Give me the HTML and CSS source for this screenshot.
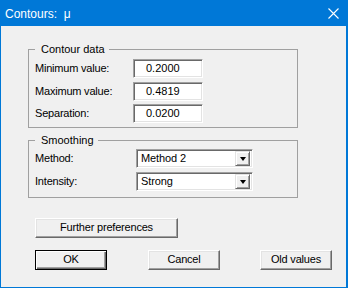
FILE: index.html
```html
<!DOCTYPE html>
<html lang="en">
<head>
<meta charset="utf-8">
<title>Contours</title>
<link rel="stylesheet" href="styles.css">
</head>
<body>
<div class="window">
  <div class="titlebar">
    <span class="title">Contours:&nbsp; μ</span>
    <svg class="close" width="11" height="11" viewBox="0 0 11 11" aria-hidden="true">
      <path d="M0.5 0.5 L10.5 10.5 M10.5 0.5 L0.5 10.5" stroke="#fff" stroke-width="1.1" fill="none"/>
    </svg>
  </div>
  <div class="content">
    <fieldset class="group group-data">
      <legend>Contour data</legend>
      <div class="rows rows-data">
        <span class="label">Minimum value:</span><span class="field">0.2000</span>
        <span class="label">Maximum value:</span><span class="field">0.4819</span>
        <span class="label">Separation:</span><span class="field">0.0200</span>
      </div>
    </fieldset>
    <fieldset class="group group-smooth">
      <legend>Smoothing</legend>
      <div class="rows rows-smooth">
        <span class="label">Method:</span>
        <span class="combo"><span class="combo-text">Method 2</span><span class="combo-btn"><span class="arrow"></span></span></span>
        <span class="label">Intensity:</span>
        <span class="combo"><span class="combo-text">Strong</span><span class="combo-btn"><span class="arrow"></span></span></span>
      </div>
    </fieldset>
    <div class="btn btn-further">Further preferences</div>
    <div class="actions">
      <div class="btn btn-default">OK</div>
      <div class="btn btn-cancel">Cancel</div>
      <div class="btn btn-old">Old values</div>
    </div>
  </div>
</div>
</body>
</html>
```
FILE: styles.css
```css
html, body {
  margin: 0;
  padding: 0;
  background: #ffffff;
}
body {
  font-family: "Liberation Sans", Arial, sans-serif;
  font-size: 11px;
  color: #000;
}
.window {
  box-sizing: border-box;
  width: 348px;
  height: 288px;
  border: 1px solid #0078d7;
  border-right-width: 2px;
  background: #f0f0f0;
  display: flex;
  flex-direction: column;
}
.titlebar {
  height: 25px;
  background: #0078d7;
  color: #fff;
  display: flex;
  align-items: center;
  justify-content: space-between;
  padding: 0 8px 0 4px;
  margin-top: -1px;
  padding-top: 1px;
  margin-right: -1px;
}
.title {
  font-family: "Liberation Sans", Arial, sans-serif;
  font-size: 12px;
  line-height: 14px;
  position: relative;
  top: 0px;
}
.close {
  display: block;
  margin-top: 0px;
}
.content {
  padding: 17px 0 0 27px;
}
.group {
  box-sizing: border-box;
  width: 270px;
  margin: 0;
  border: 1px solid #a0a0a0;
  min-width: 0;
}
.group legend {
  padding: 0 4px 0 6px;
  line-height: 12px;
  font-size: 11px;
  margin-left: 0;
}
.group-data {
  padding: 4px 0 4px 6px;
}
.group-smooth {
  margin-top: 6px;
  padding: 2.5px 0 6px 6px;
}
.rows {
  display: grid;
  align-items: center;
}
.rows-data {
  grid-template-columns: 98px 70px;
  row-gap: 3.5px;
}
.rows-smooth {
  grid-template-columns: 101px 117px;
  row-gap: 4px;
}
.label {
  line-height: 13px;
  letter-spacing: -0.2px;
}
.field {
  box-sizing: border-box;
  height: 19px;
  background: #fff;
  border: 1px solid;
  border-color: #a0a0a0 #fff #fff #a0a0a0;
  box-shadow: inset 1px 1px 0 #696969, inset -1px -1px 0 #e3e3e3;
  padding-left: 12px;
  line-height: 17px;
}
.combo {
  box-sizing: border-box;
  height: 19px;
  background: #fff;
  border: 1px solid;
  border-color: #a0a0a0 #fff #fff #a0a0a0;
  box-shadow: inset 1px 1px 0 #696969, inset -1px -1px 0 #e3e3e3;
  padding: 2px 2px 2px 4px;
  display: flex;
  align-items: center;
  justify-content: space-between;
}
.combo-text {
  line-height: 15px;
  letter-spacing: -0.1px;
}
.combo-btn {
  box-sizing: border-box;
  width: 15px;
  height: 15px;
  background: #f0f0f0;
  border: 1px solid;
  border-color: #e3e3e3 #696969 #696969 #e3e3e3;
  box-shadow: inset 1px 1px 0 #fff, inset -1px -1px 0 #a0a0a0;
  display: flex;
  align-items: center;
  justify-content: center;
}
.arrow {
  width: 0;
  height: 0;
  border-left: 3.5px solid transparent;
  border-right: 3.5px solid transparent;
  border-top: 4px solid #000;
  margin-top: 1px;
}
.btn {
  box-sizing: border-box;
  height: 20px;
  width: 72px;
  background: #f0f0f0;
  border: 1px solid;
  border-color: #fff #696969 #696969 #fff;
  box-shadow: inset -1px -1px 0 #a0a0a0, inset 1px 1px 0 #e3e3e3;
  display: flex;
  align-items: center;
  justify-content: center;
  line-height: 13px;
  letter-spacing: -0.2px;
}
.btn-further {
  width: 143px;
  margin: 20px 0 0 7px;
}
.actions {
  display: flex;
  margin: 12px 0 0 7px;
}
.btn-default {
  border: 1px solid #000;
  box-shadow: inset 1px 1px 0 #fff, inset -1px -1px 0 #696969, inset -2px -2px 0 #a0a0a0;
}
.btn-cancel {
  margin-left: 41px;
}
.btn-old {
  margin-left: 40px;
}
```
